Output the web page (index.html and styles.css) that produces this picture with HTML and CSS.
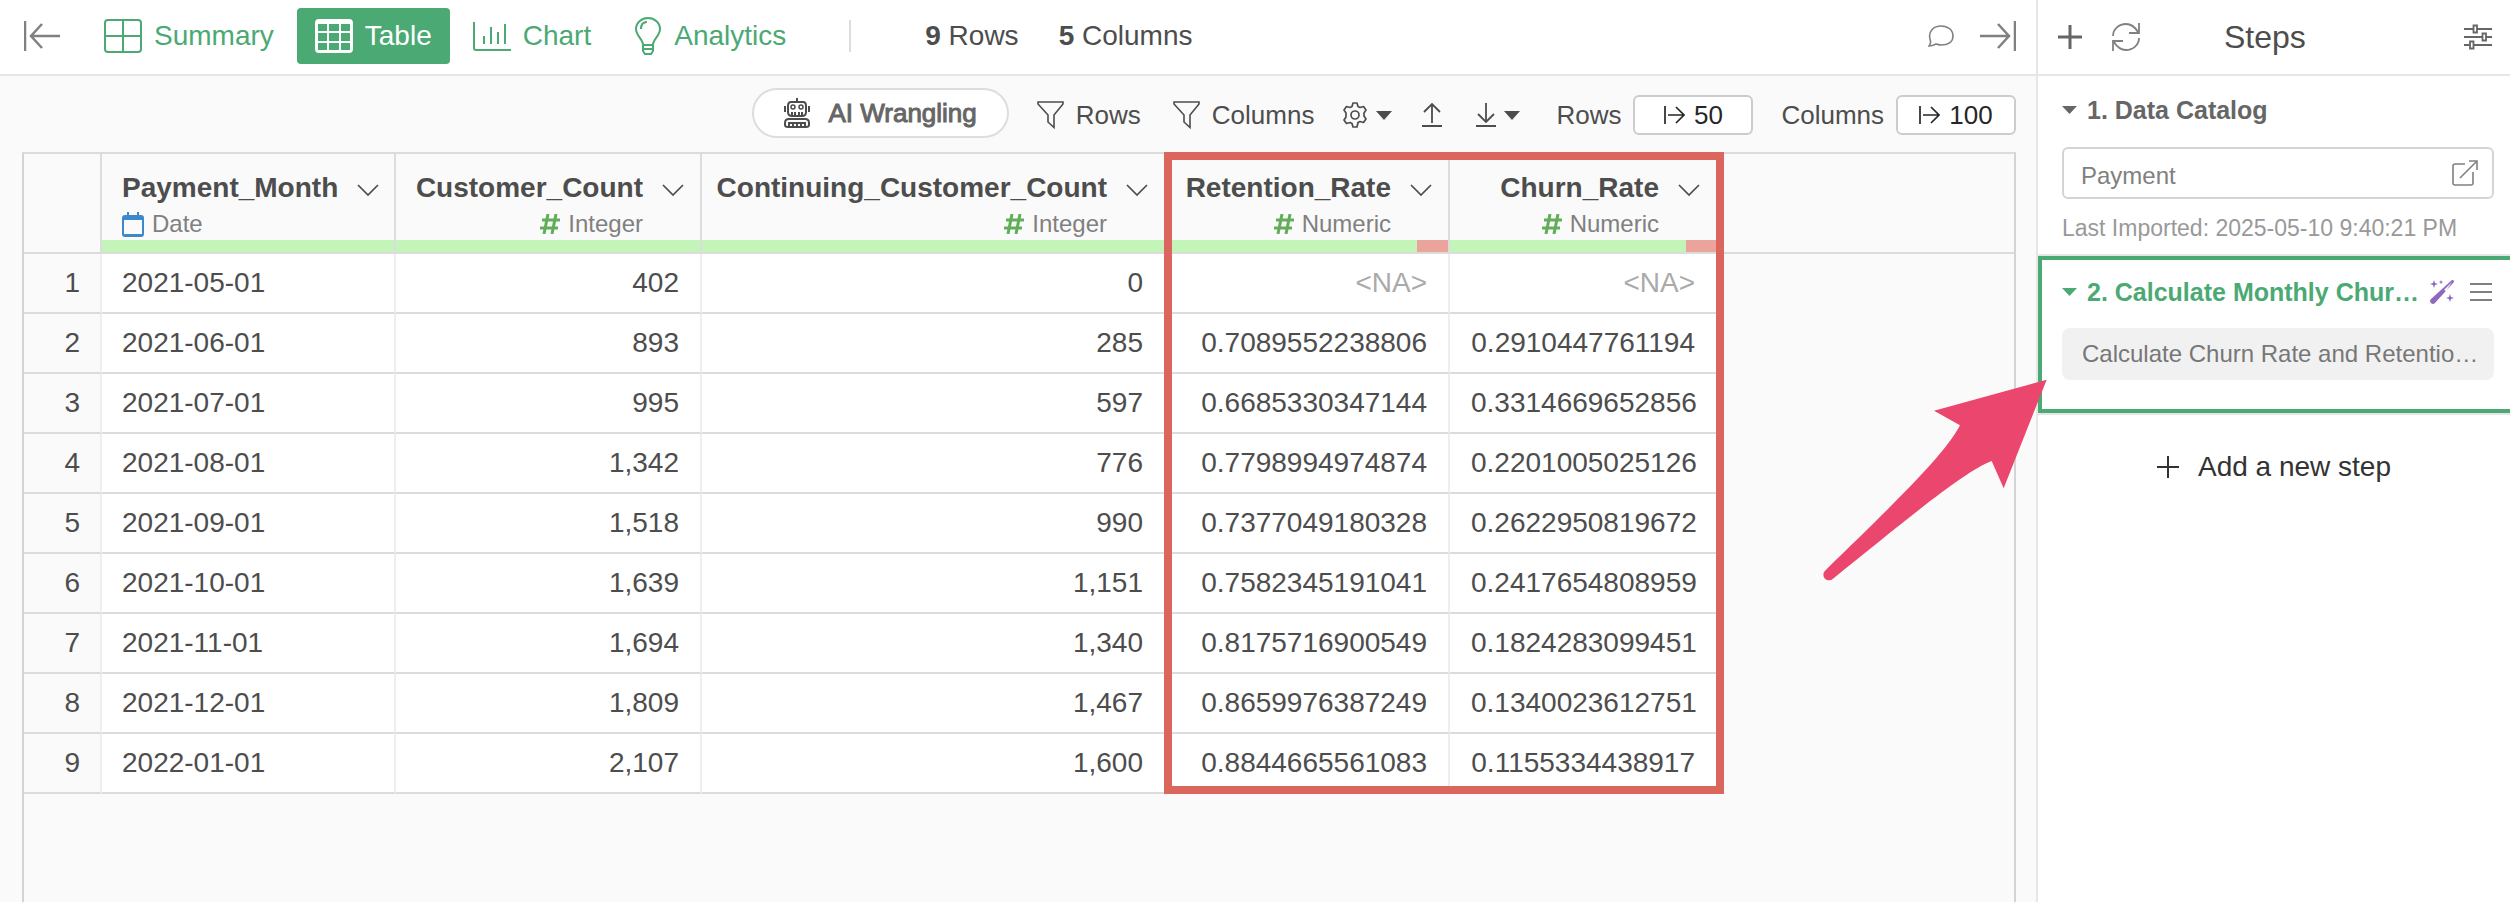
FILE: index.html
```html
<!DOCTYPE html>
<html lang="en">
<head>
    <meta charset="UTF-8">
    <meta name="viewport" content="width=device-width, initial-scale=1.0">
    <title>Calculate Monthly Churn Rate</title>
    <link rel="stylesheet" href="styles.css">
</head>
<body>

    <div class="app">
        <main class="main">
            <!-- View tabs -->
            <header class="topbar">
                <button class="icon-button" aria-label="Collapse left panel">
                    <svg class="line grey" width="36" height="32" viewBox="0 0 36 32"><path d="M1 1v30M36 16H7M18 4L7 16l11 12" stroke-width="2.5"/></svg>
                </button>
                <nav class="tabs">
                    <button class="tab">
                        <svg class="line" width="38" height="34" viewBox="0 0 38 34"><rect x="1" y="1" width="36" height="32" rx="3" stroke-width="2"/><path d="M19 1v32M1 17h36" stroke-width="2"/></svg>
                        Summary
                    </button>
                    <button class="tab active">
                        <svg width="38" height="34" viewBox="0 0 38 34"><path fill="#fff" fill-rule="evenodd" d="M4 0h30a4 4 0 0 1 4 4v26a4 4 0 0 1-4 4H4a4 4 0 0 1-4-4V4a4 4 0 0 1 4-4zM3 5v7h9V5zM14 5v7h10V5zM26 5v7h9V5zM3 14v8h9v-8zM14 14v8h10v-8zM26 14v8h9v-8zM3 24v7h9v-7zM14 24v7h10v-7zM26 24v7h9v-7z"/></svg>
                        Table
                    </button>
                    <button class="tab">
                        <svg class="line" width="38" height="30" viewBox="0 0 38 30"><path d="M1 1v26q0 2 2 2h35M11 15v8M18 6v17M25 11v12M32 3v20" stroke-width="2"/></svg>
                        Chart
                    </button>
                    <button class="tab">
                        <svg class="line" width="30" height="38" viewBox="0 0 30 38"><path d="M11 28c0-6-7-9-7-16a12 11 0 0 1 24 0c0 7-7 10-7 16zM11 28v6l2 3h6l2-3v-6M11 32h10M9 12c0-4 2-7 6-7" stroke-width="2"/></svg>
                        Analytics
                    </button>
                </nav>
                <div class="counts">
                    <span><b>9</b> Rows</span>
                    <span><b>5</b> Columns</span>
                </div>
                <div class="topbar-right">
                    <button class="icon-button" aria-label="Comments">
                        <svg class="line grey" width="26" height="22" viewBox="0 0 26 22"><path d="M1 21c2-2 2-4 1-7C0 6 6 1 13 1s12 4 12 10-5 9-12 9c-2 0-4-1-5-1-2 1-4 2-7 2z" stroke-width="1.6"/></svg>
                    </button>
                    <button class="icon-button" aria-label="Collapse right panel">
                        <svg class="line grey" width="36" height="32" viewBox="0 0 36 32"><path d="M35 1v30M0 16h29M18 4l11 12-11 12" stroke-width="2.5"/></svg>
                    </button>
                </div>
            </header>

            <!-- Table toolbar -->
            <div class="toolbar">
                <button class="ai-button">
                    <svg class="line" width="26" height="30" viewBox="0 0 26 30"><path d="M13 0v4M1 8v6M25 8v6M7 4h12q3 0 3 4v6q0 4-4 4H8q-4 0-4-4V8q0-4 3-4zM8 14v4M11 14v4M15 14v4M18 14v4M5 21h16q4 0 4 4v2q0 2-3 2H4q-3 0-3-2v-2q0-4 4-4zM5 28v-3h16v3M9 25v4M13 25v4M17 25v4" stroke-width="2"/><circle cx="9" cy="9" r="2" stroke-width="1.5"/><circle cx="17" cy="9" r="2" stroke-width="1.5"/></svg>
                    AI Wrangling
                </button>
                <button class="tool">
                    <svg class="line" width="27" height="28" viewBox="0 0 27 28"><path d="M1 1h25v2L17 14v12.500L11 21v-7L1 3z" stroke-width="1.6"/></svg>
                    Rows
                </button>
                <button class="tool filter-columns">
                    <svg class="line" width="27" height="28" viewBox="0 0 27 28"><path d="M1 1h25v2L17 14v12.500L11 21v-7L1 3z" stroke-width="1.6"/></svg>
                    Columns
                </button>
                <button class="tool menu-tool" aria-label="Settings">
                    <svg class="line" width="26" height="26" viewBox="0 0 26 26"><path d="M11 1h4l1 3.500 2 1 3.500-1 2.500 3.500-2 3v3l2 3-2.500 3.500-3.500-1-2 1L15 25h-4l-1-3.500-2-1-3.500 1L2 18l2-3v-4L2 8l2.500-3.500L8 5.500l2-1z" stroke-width="1.7" stroke-linejoin="round"/><circle cx="13" cy="13" r="4" stroke-width="1.7"/></svg>
                    <svg width="16" height="9" viewBox="0 0 16 9"><path d="M0 0h16L8 9z" fill="currentColor"/></svg>
                </button>
                <button class="tool upload" aria-label="Import">
                    <svg class="line" width="20" height="24" viewBox="0 0 20 24"><path d="M10 20V1M2 9l8-8 8 8M0 23h20" stroke-width="1.800"/></svg>
                </button>
                <button class="tool menu-tool download" aria-label="Export">
                    <svg class="line" width="20" height="24" viewBox="0 0 20 24"><path d="M10 0v19M2 11l8 8 8-8M0 23h20" stroke-width="1.800"/></svg>
                    <svg width="16" height="9" viewBox="0 0 16 9"><path d="M0 0h16L8 9z" fill="currentColor"/></svg>
                </button>
                <div class="limit limit-rows">
                    <label for="row-limit">Rows</label>
                    <button class="limit-button" id="row-limit">
                        <svg class="line" width="21" height="18" viewBox="0 0 21 18"><path d="M1 0v18M4 9h16M12 1l8 8-8 8" stroke-width="1.700"/></svg>
                        50
                    </button>
                </div>
                <div class="limit">
                    <label for="column-limit">Columns</label>
                    <button class="limit-button" id="column-limit">
                        <svg class="line" width="21" height="18" viewBox="0 0 21 18"><path d="M1 0v18M4 9h16M12 1l8 8-8 8" stroke-width="1.700"/></svg>
                        100
                    </button>
                </div>
            </div>

            <!-- Data grid -->
            <section class="grid">
                <table class="data">
                    <colgroup>
                        <col class="col-index">
                        <col class="col-month">
                        <col class="col-customers">
                        <col class="col-continuing">
                        <col class="col-retention">
                        <col class="col-churn">
                        <col>
                    </colgroup>
                    <thead>
                        <tr>
                            <th></th>
                            <th>
                                <div class="column-head date">
                                    <div class="column-info">
                                        <div class="column-name">Payment_Month</div>
                                        <div class="column-type"><svg width="22" height="25" viewBox="0 0 22 25"><path fill="#3d87cc" fill-rule="evenodd" d="M5 0h2v3h8V0h2v3h2a3 3 0 0 1 3 3v16a3 3 0 0 1-3 3H3a3 3 0 0 1-3-3V6a3 3 0 0 1 3-3h2zM2 8v14h18V8z"/></svg>Date</div>
                                    </div>
                                    <button class="chevron" aria-label="Column menu"><svg class="line" width="22" height="12" viewBox="0 0 22 12"><path d="M1 1l10 10L21 1" stroke-width="1.700"/></svg></button>
                                </div>
                                <div class="quality"><i class="valid"></i></div>
                            </th>
                            <th>
                                <div class="column-head">
                                    <div class="column-info">
                                        <div class="column-name">Customer_Count</div>
                                        <div class="column-type"><svg class="line hash" width="20" height="20" viewBox="0 0 20 20"><path d="M8 0L4 20M16 0l-4 20M2 6h18M0 14h18" stroke-width="3"/></svg>Integer</div>
                                    </div>
                                    <button class="chevron" aria-label="Column menu"><svg class="line" width="22" height="12" viewBox="0 0 22 12"><path d="M1 1l10 10L21 1" stroke-width="1.700"/></svg></button>
                                </div>
                                <div class="quality"><i class="valid"></i></div>
                            </th>
                            <th>
                                <div class="column-head">
                                    <div class="column-info">
                                        <div class="column-name">Continuing_Customer_Count</div>
                                        <div class="column-type"><svg class="line hash" width="20" height="20" viewBox="0 0 20 20"><path d="M8 0L4 20M16 0l-4 20M2 6h18M0 14h18" stroke-width="3"/></svg>Integer</div>
                                    </div>
                                    <button class="chevron" aria-label="Column menu"><svg class="line" width="22" height="12" viewBox="0 0 22 12"><path d="M1 1l10 10L21 1" stroke-width="1.700"/></svg></button>
                                </div>
                                <div class="quality"><i class="valid"></i></div>
                            </th>
                            <th>
                                <div class="column-head">
                                    <div class="column-info">
                                        <div class="column-name">Retention_Rate</div>
                                        <div class="column-type"><svg class="line hash" width="20" height="20" viewBox="0 0 20 20"><path d="M8 0L4 20M16 0l-4 20M2 6h18M0 14h18" stroke-width="3"/></svg>Numeric</div>
                                    </div>
                                    <button class="chevron" aria-label="Column menu"><svg class="line" width="22" height="12" viewBox="0 0 22 12"><path d="M1 1l10 10L21 1" stroke-width="1.700"/></svg></button>
                                </div>
                                <div class="quality"><i class="valid"></i><i class="missing"></i></div>
                            </th>
                            <th>
                                <div class="column-head">
                                    <div class="column-info">
                                        <div class="column-name">Churn_Rate</div>
                                        <div class="column-type"><svg class="line hash" width="20" height="20" viewBox="0 0 20 20"><path d="M8 0L4 20M16 0l-4 20M2 6h18M0 14h18" stroke-width="3"/></svg>Numeric</div>
                                    </div>
                                    <button class="chevron" aria-label="Column menu"><svg class="line" width="22" height="12" viewBox="0 0 22 12"><path d="M1 1l10 10L21 1" stroke-width="1.700"/></svg></button>
                                </div>
                                <div class="quality"><i class="valid"></i><i class="missing"></i></div>
                            </th>
                            <th class="filler"></th>
                        </tr>
                    </thead>
                    <tbody>
                        <tr><th>1</th><td>2021-05-01</td><td>402</td><td>0</td><td class="na">&lt;NA&gt;</td><td class="na">&lt;NA&gt;</td><td class="filler"></td></tr>
                        <tr><th>2</th><td>2021-06-01</td><td>893</td><td>285</td><td>0.7089552238806</td><td>0.2910447761194</td><td class="filler"></td></tr>
                        <tr><th>3</th><td>2021-07-01</td><td>995</td><td>597</td><td>0.6685330347144</td><td>0.3314669652856</td><td class="filler"></td></tr>
                        <tr><th>4</th><td>2021-08-01</td><td>1,342</td><td>776</td><td>0.7798994974874</td><td>0.2201005025126</td><td class="filler"></td></tr>
                        <tr><th>5</th><td>2021-09-01</td><td>1,518</td><td>990</td><td>0.7377049180328</td><td>0.2622950819672</td><td class="filler"></td></tr>
                        <tr><th>6</th><td>2021-10-01</td><td>1,639</td><td>1,151</td><td>0.7582345191041</td><td>0.2417654808959</td><td class="filler"></td></tr>
                        <tr><th>7</th><td>2021-11-01</td><td>1,694</td><td>1,340</td><td>0.8175716900549</td><td>0.1824283099451</td><td class="filler"></td></tr>
                        <tr><th>8</th><td>2021-12-01</td><td>1,809</td><td>1,467</td><td>0.8659976387249</td><td>0.1340023612751</td><td class="filler"></td></tr>
                        <tr><th>9</th><td>2022-01-01</td><td>2,107</td><td>1,600</td><td>0.8844665561083</td><td>0.1155334438917</td><td class="filler"></td></tr>
                    </tbody>
                </table>
                <!-- Frame around the two rate columns -->
                <div class="highlight"></div>
            </section>
        </main>

        <!-- Steps Section -->
        <aside class="sidebar">
            <header class="sidebar-header">
                <button class="icon-button" aria-label="Add step">
                    <svg class="line dark" width="24" height="24" viewBox="0 0 24 24"><path d="M12 0v24M0 12h24" stroke-width="3"/></svg>
                </button>
                <button class="icon-button refresh" aria-label="Refresh">
                    <svg class="line grey" width="28" height="28" viewBox="0 0 28 28"><path d="M1 13C1 6 7 1 14 1c5 0 9 3 12 8M27 0v10H17M27 15c0 7-6 12-13 12-5 0-9-3-12-8M1 28V18h10" stroke-width="1.800"/></svg>
                </button>
                <h1>Steps</h1>
                <button class="icon-button sliders" aria-label="Options">
                    <svg class="line dark" width="28" height="26" viewBox="0 0 28 26"><path d="M0 5h9M13 5h15M0 13h18M22 13h6M0 21h6M10 21h18" stroke-width="2"/><path d="M9.500 1.500h3.500v7H9.500zM18.500 9.500H22v7h-3.500zM6 17.500h3.500v7H6z" stroke-width="1.800"/></svg>
                </button>
            </header>

            <section class="step">
                <div class="step-title">
                    <svg class="caret" width="15" height="8" viewBox="0 0 15 8"><path d="M0 0h15L7.500 8z" fill="currentColor"/></svg>
                    <h2>1. Data Catalog</h2>
                </div>
                <div class="source">
                    <input type="text" value="Payment" aria-label="Data source" readonly>
                    <svg class="line" width="26" height="26" viewBox="0 0 26 26"><path d="M13 4H3Q1 4 1 6v17q0 2 2 2h16q2 0 2-2V12M8 18L24 2M17 1h8v9" stroke-width="1.600"/></svg>
                </div>
                <p class="imported">Last Imported: 2025-05-10 9:40:21 PM</p>
            </section>

            <section class="step current">
                <div class="step-title">
                    <svg class="caret" width="15" height="8" viewBox="0 0 15 8"><path d="M0 0h15L7.500 8z" fill="currentColor"/></svg>
                    <h2>2. Calculate Monthly Chur…</h2>
                    <div class="step-actions">
                        <button class="icon-button" aria-label="AI prompt">
                            <svg width="24" height="24" viewBox="0 0 24 24" fill="#9069bd"><path fill-rule="evenodd" d="M22 0q2-.5 2 2L5 23q-2 2-4 0t0-4zM14 10l8-8-6 9z"/><path d="M4 0l1 3 3 1-3 1-1 3-1-3-3-1 3-1zM11 0l.6 1.500 1.500.6-1.500.6L11 4.200l-.6-1.500-1.500-.6 1.500-.6zM20 14l1 3 3 1-3 1-1 3-1-3-3-1 3-1z"/></svg>
                        </button>
                        <button class="icon-button" aria-label="Step menu">
                            <svg class="line grey" width="22" height="18" viewBox="0 0 22 18"><path d="M0 1h22M0 9h22M0 17h22" stroke-width="2"/></svg>
                        </button>
                    </div>
                </div>
                <button class="operation">Calculate Churn Rate and Retentio…</button>
                <!-- Callout arrow -->
                <svg class="callout" width="300" height="240" viewBox="0 0 900 720"><path fill="#eb466d" d="M740 59L402 152l78 44C430 290 280 432 75 632a14 14 0 0 0 24 24C300 495 490 335 575 303l36 82z"/></svg>
            </section>

            <button class="add-step">
                <svg class="line" width="22" height="22" viewBox="0 0 22 22"><path d="M11 0v22M0 11h22" stroke-width="2"/></svg>
                Add a new step
            </button>
        </aside>
    </div>

</body>
</html>
```

FILE: styles.css
```css
* {
    box-sizing: border-box;
}
body {
    margin: 0;
    font-family: "Liberation Sans", Arial, sans-serif;
    font-size: 28px;
    line-height: 32px;
    color: #4d4d4d;
    background-color: #fafafa;
}
button {
    display: flex;
    align-items: center;
    padding: 0;
    border: none;
    background: none;
    color: inherit;
    font: inherit;
    white-space: nowrap;
    cursor: pointer;
}
svg {
    display: block;
    flex-shrink: 0;
}
.line {
    fill: none;
    stroke: currentColor;
}
.grey {
    color: #808080;
}
.dark {
    color: #666;
}
.app {
    display: flex;
    min-height: 100vh;
}
.main {
    flex: 1;
    min-width: 0;
    display: flex;
    flex-direction: column;
}

/* Top bar */
.topbar {
    display: flex;
    align-items: center;
    height: 76px;
    padding: 0 20px 2px 24px;
    background-color: white;
    border-bottom: 2px solid #e6e6e6;
}
.tabs {
    display: flex;
    gap: 5px;
    margin-left: 26px;
}
.tab {
    height: 56px;
    gap: 12px;
    padding: 0 18px;
    border-radius: 4px;
    color: #4ba973;
}
.tab.active {
    background-color: #4ba973;
    color: white;
}
.counts {
    display: flex;
    gap: 40px;
    margin-left: 45px;
    padding-left: 74px;
    border-left: 2px solid #ddd;
}
.topbar-right {
    display: flex;
    align-items: center;
    gap: 26px;
    margin-left: auto;
}

/* Toolbar */
.toolbar {
    display: flex;
    align-items: center;
    justify-content: flex-end;
    gap: 28px;
    height: 76px;
    padding: 2px 20px 0;
    font-size: 26px;
    line-height: 30px;
}
.ai-button {
    height: 50px;
    gap: 18px;
    margin-bottom: 4px;
    padding: 0 30px;
    border: 2px solid #ddd;
    border-radius: 25px;
    background-color: white;
    color: #666;
    -webkit-text-stroke: 1px #666;
}
.ai-button svg {
    color: #4d4d4d;
}
.tool {
    gap: 12px;
}
.menu-tool {
    gap: 8px;
}
.filter-columns {
    margin-left: 4px;
}
.upload {
    margin-left: 2px;
}
.download {
    margin-left: 6px;
}
.limit {
    display: flex;
    align-items: center;
    gap: 12px;
}
.limit-rows {
    margin-left: 8px;
}
.limit-button {
    justify-content: center;
    gap: 9px;
    width: 120px;
    height: 40px;
    border: 2px solid #ccc;
    border-radius: 6px;
    background-color: white;
    color: #262626;
}

/* Data grid */
.grid {
    flex: 1;
    position: relative;
    margin: 0 20px 0 22px;
    border: 2px solid #d4d4d4;
    border-top-color: #dcdcdc;
    border-bottom: none;
}
.data {
    width: 100%;
    table-layout: fixed;
    border-collapse: separate;
    border-spacing: 0;
}
.col-index {
    width: 78px;
}
.col-month {
    width: 294px;
}
.col-customers {
    width: 306px;
}
.col-continuing {
    width: 464px;
}
.col-retention {
    width: 284px;
}
.col-churn {
    width: 268px;
}
.data th,
.data td {
    padding: 0;
    border-right: 2px solid #eee;
    border-bottom: 2px solid #dcdcdc;
    font-weight: normal;
    text-align: right;
}
.data td {
    height: 60px;
    padding: 0 21px;
    background-color: white;
}
.data td:nth-child(2) {
    padding-left: 20px;
    text-align: left;
}
.data tbody th {
    padding-right: 20px;
}
.data thead th {
    height: 100px;
    border-right-color: #dcdcdc;
    vertical-align: bottom;
}
.data th.filler {
    border-right: none;
}
.data td.filler {
    border: none;
    background: none;
}
.data td.na {
    color: #aaa;
}
.column-head {
    display: flex;
    justify-content: flex-end;
    gap: 19px;
    padding: 0 16px 2px 20px;
}
.column-head.date {
    justify-content: space-between;
}
.column-info {
    display: flex;
    flex-direction: column;
    align-items: flex-end;
    gap: 6px;
}
.date .column-info {
    align-items: flex-start;
}
.column-name {
    font-weight: bold;
}
.column-type {
    display: flex;
    align-items: center;
    gap: 8px;
    font-size: 24px;
    line-height: 28px;
    color: #808080;
}
.hash {
    color: #62ae58;
}
.chevron {
    align-self: flex-start;
    height: 36px;
}
.quality {
    display: flex;
    height: 12px;
}
.valid {
    flex: 8;
    background-color: #c4f5b8;
}
.missing {
    flex: 1;
    background-color: #eba49c;
}
.highlight {
    position: absolute;
    top: -2px;
    left: 1140px;
    width: 560px;
    height: 642px;
    border: 8px solid #db665d;
    pointer-events: none;
}

/* Steps */
.sidebar {
    width: 474px;
    border-left: 2px solid #e6e6e6;
    background-color: white;
}
.sidebar-header {
    display: flex;
    align-items: center;
    height: 76px;
    padding: 0 18px 0 20px;
    border-bottom: 2px solid #e6e6e6;
}
.sidebar-header h1 {
    margin: 0 0 0 84px;
    font-size: 32px;
    line-height: 36px;
    font-weight: normal;
}
.refresh {
    margin-left: 30px;
}
.sliders {
    margin-left: auto;
}
.step {
    padding: 20px 16px 13px 24px;
    border-bottom: 2px solid #e6e6e6;
}
.step-title {
    display: flex;
    align-items: center;
    gap: 10px;
    color: #666;
}
.step-title h2 {
    margin: 0;
    font-size: 25px;
    line-height: 28px;
    white-space: nowrap;
}
.source {
    display: flex;
    align-items: center;
    height: 52px;
    margin-top: 23px;
    padding: 0 14px 0 17px;
    border: 2px solid #d4d4d4;
    border-radius: 6px;
    color: #808080;
}
.source input {
    flex: 1;
    min-width: 0;
    height: 48px;
    padding: 6px 0 0;
    border: none;
    outline: none;
    background: none;
    color: inherit;
    font-family: inherit;
    font-size: 24px;
}
.imported {
    margin: 16px 0 0;
    font-size: 23px;
    line-height: 26px;
    color: #999;
}
.current {
    position: relative;
    padding: 18px 16px 29px 20px;
    border: 4px solid #4ba973;
    border-right: none;
    box-shadow: 0 2px 0 #e6e6e6;
}
.current .step-title {
    color: #4ba973;
}
.step-actions {
    display: flex;
    align-items: center;
    gap: 16px;
    margin-left: auto;
    margin-right: 2px;
}
.operation {
    width: 100%;
    height: 52px;
    margin-top: 22px;
    padding: 0 16px 0 20px;
    border-radius: 8px;
    background-color: #f1f1f1;
    color: #777;
    font-size: 24px;
}
.callout {
    position: absolute;
    top: 100px;
    left: -242px;
    pointer-events: none;
}
.add-step {
    gap: 19px;
    margin: 38px auto 0;
    color: #333;
}
```
